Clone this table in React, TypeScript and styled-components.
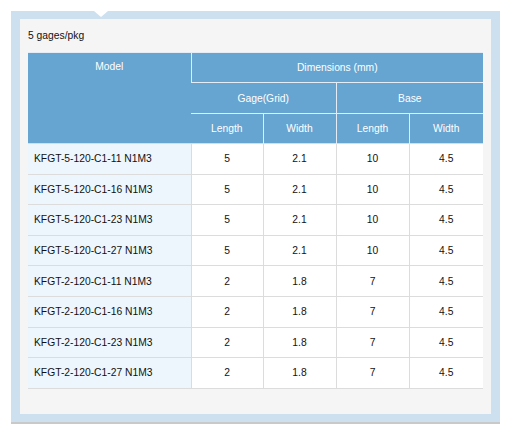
import React from "react";
import styled, { createGlobalStyle } from "styled-components";

const Global = createGlobalStyle`
  html, body { margin: 0; padding: 0; background: #ffffff; }
  body { font-family: Arial, "Liberation Sans", Helvetica, sans-serif; }
`;

const Frame = styled.div`
  position: relative;
  margin: 11px 0 0 11px;
  width: 489px;
  box-sizing: border-box;
  padding: 8px 9px 8px 9px;
  background: #cde0ef;
  border-bottom: 2px solid #c9c9c9;
`;

const Notch = styled.div`
  position: absolute;
  top: 0;
  left: 83px;
  width: 0;
  height: 0;
  border-left: 7px solid transparent;
  border-right: 7px solid transparent;
  border-top: 6px solid #ffffff;
`;

const Panel = styled.div`
  background: #f5f5f5;
  padding: 10px 8px 25px 8px;
`;

const Caption = styled.div`
  font-size: 10.3px;
  line-height: 14px;
  color: #111;
  height: 23px;
`;

const Table = styled.table`
  width: 455px;
  border-collapse: collapse;
  table-layout: fixed;
  font-size: 10.3px;
  border-top: 1px solid #dcdcdc;
  border-bottom: 1px solid #dcdcdc;
`;

const Head = styled.th<{ $top?: boolean; $h: number }>`
  background: #66a4d1;
  color: #ffffff;
  font-weight: normal;
  text-align: center;
  vertical-align: ${(p) => (p.$top ? "top" : "middle")};
  padding: ${(p) => (p.$top ? "8px 0 0 0" : "0")};
  height: ${(p) => p.$h}px;
  box-sizing: border-box;
  border-left: 1px solid #e4edf5;
  border-top: 1px solid #e4edf5;
  &:first-child { border-left: none; }
`;

const ModelCell = styled.td`
  background: #eef6fd;
  color: #111;
  text-align: left;
  padding: 0 0 0 6px;
  height: 30.6px;
  box-sizing: border-box;
  border-top: 1px solid #dcdcdc;
`;

const ValueCell = styled.td`
  background: #ffffff;
  color: #111;
  text-align: center;
  padding: 0;
  border-top: 1px solid #dcdcdc;
  border-left: 1px solid #dcdcdc;
`;

const rows = [
  ["KFGT-5-120-C1-11 N1M3", "5", "2.1", "10", "4.5"],
  ["KFGT-5-120-C1-16 N1M3", "5", "2.1", "10", "4.5"],
  ["KFGT-5-120-C1-23 N1M3", "5", "2.1", "10", "4.5"],
  ["KFGT-5-120-C1-27 N1M3", "5", "2.1", "10", "4.5"],
  ["KFGT-2-120-C1-11 N1M3", "2", "1.8", "7", "4.5"],
  ["KFGT-2-120-C1-16 N1M3", "2", "1.8", "7", "4.5"],
  ["KFGT-2-120-C1-23 N1M3", "2", "1.8", "7", "4.5"],
  ["KFGT-2-120-C1-27 N1M3", "2", "1.8", "7", "4.5"],
];

export default function App() {
  return (
    <>
      <Global />
      <Frame>
        <Notch />
        <Panel>
          <Caption>5 gages/pkg</Caption>
          <Table>
            <colgroup>
              <col style={{ width: 163 }} />
              <col style={{ width: 72 }} />
              <col style={{ width: 73 }} />
              <col style={{ width: 73 }} />
              <col style={{ width: 74 }} />
            </colgroup>
            <thead>
              <tr>
                <Head rowSpan={3} $top $h={30}>Model</Head>
                <Head colSpan={4} $h={30}>Dimensions (mm)</Head>
              </tr>
              <tr>
                <Head colSpan={2} $h={31}>Gage(Grid)</Head>
                <Head colSpan={2} $h={31}>Base</Head>
              </tr>
              <tr>
                <Head $h={30}>Length</Head>
                <Head $h={30}>Width</Head>
                <Head $h={30}>Length</Head>
                <Head $h={30}>Width</Head>
              </tr>
            </thead>
            <tbody>
              {rows.map((r) => (
                <tr key={r[0]}>
                  <ModelCell>{r[0]}</ModelCell>
                  <ValueCell>{r[1]}</ValueCell>
                  <ValueCell>{r[2]}</ValueCell>
                  <ValueCell>{r[3]}</ValueCell>
                  <ValueCell>{r[4]}</ValueCell>
                </tr>
              ))}
            </tbody>
          </Table>
        </Panel>
      </Frame>
    </>
  );
}
